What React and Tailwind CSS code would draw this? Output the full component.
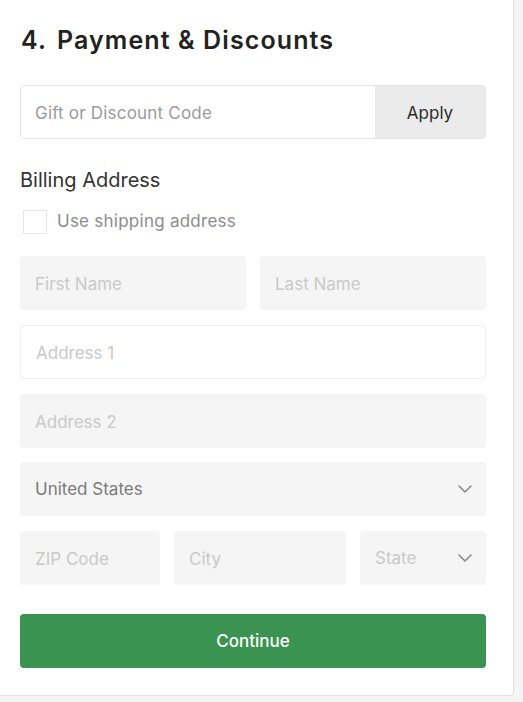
import React from 'react';

const Chevron = () => (
  <svg width="14" height="8" viewBox="0 0 14 8" fill="none" className="shrink-0">
    <path d="M1 1l6 6 6-6" stroke="#8a8a8a" strokeWidth="1.6" strokeLinecap="round" strokeLinejoin="round" />
  </svg>
);

const Field = ({ placeholder, className = '', white = false }) => (
  <input
    type="text"
    placeholder={placeholder}
    className={`h-[54px] rounded-[4px] pl-[15px] pr-3 pt-[3px] text-[17px] text-[#333] placeholder:text-[#c9c9c9] outline-none ${
      white ? 'bg-white border border-[#f0f0f0]' : 'bg-[#f5f5f5]'
    } ${className}`}
  />
);

const App = () => {
  return (
    <div className="w-[523px] h-[702px] bg-[#f4f4f4]" style={{ fontFamily: 'Inter, "Noto Sans", sans-serif' }}>
      <div className="w-[514px] bg-white border-r border-b border-[#e2e2e2] rounded-br-[4px] pl-5 pr-[27px] pt-6 pb-[27px]">
        {/* Heading */}
        <h2 className="text-[25px] leading-8 font-semibold text-[#222] tracking-[1.1px] pl-px">
          <span className="mr-[10px]">4.</span>Payment &amp; Discounts
        </h2>

        {/* Discount code */}
        <div className="mt-[29px] flex h-[54px] rounded-[4px] border border-[#e6e6e6] overflow-hidden">
          <input
            type="text"
            placeholder="Gift or Discount Code"
            className="flex-1 min-w-0 pl-[14px] pt-[3px] text-[17px] tracking-[0.2px] text-[#333] placeholder:text-[#9b9b9b] outline-none bg-white"
          />
          <button className="w-[110px] bg-[#ebebeb] pt-[3px] text-[17px] text-[#2b2b2b]">Apply</button>
        </div>

        {/* Billing */}
        <h3 className="mt-[29px] text-[20px] leading-6 text-[#333]">Billing Address</h3>
        <label className="mt-[17px] ml-[3px] flex items-center gap-[10px]">
          <span className="w-6 h-6 border border-[#e6e6e6] bg-white" />
          <span className="text-[17px] tracking-[0.25px] text-[#8c8c8c]">Use shipping address</span>
        </label>

        <div className="mt-[21px] flex flex-col gap-[15px]">
          <div className="flex gap-[14px]">
            <Field placeholder="First Name" className="flex-1 min-w-0" />
            <Field placeholder="Last Name" className="flex-1 min-w-0" />
          </div>
          <Field placeholder="Address 1" white className="w-full" />
          <Field placeholder="Address 2" className="w-full" />
          <div className="h-[54px] rounded-[4px] bg-[#f5f5f5] pl-[15px] pr-[14px] flex items-center justify-between -mt-px">
            <span className="pt-[3px] text-[17px] text-[#7a7a7a]">United States</span>
            <Chevron />
          </div>
          <div className="flex gap-[14px]">
            <Field placeholder="ZIP Code" className="w-[140px] min-w-0" />
            <Field placeholder="City" className="flex-1 min-w-0" />
            <div className="w-[126px] h-[54px] rounded-[4px] bg-[#f5f5f5] pl-[15px] pr-[14px] flex items-center justify-between">
              <span className="pt-[3px] text-[17px] text-[#c9c9c9]">State</span>
              <Chevron />
            </div>
          </div>
        </div>

        <button className="mt-[29px] w-full h-[54px] rounded-[4px] bg-[#3a9350] pt-[2px] text-white text-[17px] font-medium">
          Continue
        </button>
      </div>
    </div>
  );
};

export default App;
